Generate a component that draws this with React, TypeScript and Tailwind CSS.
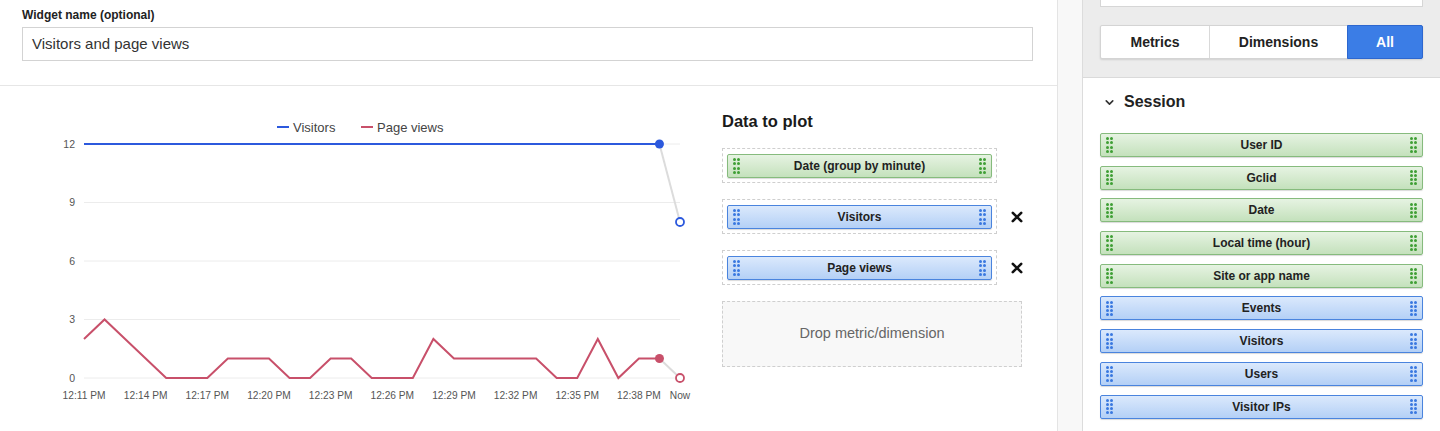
import { ChevronDown } from "lucide-react";

const FONT = { fontFamily: '"Liberation Sans", Arial, sans-serif' };

const X0 = 84;
const STEP = 596 / 29;
const Y0 = 378;
const UNIT = 19.5;

const pageViews = [2, 3, 2, 1, 0, 0, 0, 1, 1, 1, 0, 0, 1, 1, 0, 0, 0, 2, 1, 1, 1, 1, 1, 0, 0, 2, 0, 1, 1];
const xLabels = ["12:11 PM", "12:14 PM", "12:17 PM", "12:20 PM", "12:23 PM", "12:26 PM", "12:29 PM", "12:32 PM", "12:35 PM", "12:38 PM"];

const sessionItems: { label: string; kind: "dim" | "metric" }[] = [
  { label: "User ID", kind: "dim" },
  { label: "Gclid", kind: "dim" },
  { label: "Date", kind: "dim" },
  { label: "Local time (hour)", kind: "dim" },
  { label: "Site or app name", kind: "dim" },
  { label: "Events", kind: "metric" },
  { label: "Visitors", kind: "metric" },
  { label: "Users", kind: "metric" },
  { label: "Visitor IPs", kind: "metric" },
];

const xAt = (i: number) => X0 + i * STEP;
const yAt = (v: number) => Y0 - v * UNIT;

function Grip({ kind }: { kind: "dim" | "metric" }) {
  const dot = kind === "dim" ? "bg-[#3f9f35]" : "bg-[#3a78e0]";
  return (
    <div className="grid grid-cols-2 gap-x-[1px] gap-y-[1.2px]">
      {Array.from({ length: 8 }, (_, i) => (
        <span key={i} className={`h-[3px] w-[3px] rounded-full ${dot}`} />
      ))}
    </div>
  );
}

function Pill({ label, kind }: { label: string; kind: "dim" | "metric" }) {
  const look =
    kind === "dim"
      ? "border-[#86bb7d] bg-gradient-to-b from-[#e6f3e2] to-[#c4e1bc]"
      : "border-[#4a84de] bg-gradient-to-b from-[#dbe9fc] to-[#b4d0f6]";
  return (
    <div
      className={`flex h-[24px] items-center justify-between rounded-[2px] border px-[5px] shadow-[0_1px_1px_rgba(0,0,0,0.15)] ${look}`}
    >
      <Grip kind={kind} />
      <span className="text-[12px] font-bold text-[#222]">{label}</span>
      <Grip kind={kind} />
    </div>
  );
}

function CloseMark() {
  return (
    <svg width="12" height="12" viewBox="0 0 12 12" className="ml-[14px]">
      <path d="M1.8 1.8 L10.2 10.2 M10.2 1.8 L1.8 10.2" stroke="#111" strokeWidth="2.6" strokeLinecap="round" />
    </svg>
  );
}

function PlotSlot({ label, kind, removable }: { label: string; kind: "dim" | "metric"; removable?: boolean }) {
  return (
    <div className="flex items-center">
      <div className="w-[275px] border border-dashed border-[#cfcfcf] px-[4px] pt-[5px] pb-[4px]">
        <Pill label={label} kind={kind} />
      </div>
      {removable && <CloseMark />}
    </div>
  );
}

function Chart() {
  const pvPoints = pageViews.map((v, i) => `${xAt(i)},${yAt(v)}`).join(" ");
  const lastX = xAt(28);
  const nowX = xAt(29);
  return (
    <svg width="700" height="344" viewBox="0 86 700 344" className="shrink-0" style={FONT}>
      {[0, 3, 6, 9, 12].map((v) => (
        <g key={v}>
          <line x1={X0} x2={nowX} y1={yAt(v)} y2={yAt(v)} stroke="#ececec" strokeWidth="1" />
          <text x="75" y={yAt(v) + 3.5} textAnchor="end" fontSize="10.5" fill="#555">
            {v}
          </text>
        </g>
      ))}
      {xLabels.map((l, i) => (
        <text key={l} x={xAt(i * 3)} y="399" textAnchor="middle" fontSize="10.2" fill="#555">
          {l}
        </text>
      ))}
      <text x={nowX} y="399" textAnchor="middle" fontSize="10.2" fill="#555">
        Now
      </text>

      <line x1="277" x2="289" y1="127" y2="127" stroke="#2c59dd" strokeWidth="2" />
      <text x="293" y="131.5" fontSize="13" fill="#444">
        Visitors
      </text>
      <line x1="361" x2="373" y1="127" y2="127" stroke="#c8506a" strokeWidth="2" />
      <text x="377" y="131.5" fontSize="13" fill="#444">
        Page views
      </text>

      <line x1={lastX} y1={yAt(12)} x2={nowX} y2={yAt(8)} stroke="#dcdcdc" strokeWidth="2" />
      <line x1={lastX} y1={yAt(1)} x2={nowX} y2={yAt(0)} stroke="#dcdcdc" strokeWidth="2" />

      <line x1={X0} x2={lastX} y1={yAt(12)} y2={yAt(12)} stroke="#2c59dd" strokeWidth="2" />
      <polyline points={pvPoints} fill="none" stroke="#c8506a" strokeWidth="2" strokeLinejoin="miter" />

      <circle cx={lastX} cy={yAt(12)} r="4.5" fill="#2c59dd" />
      <circle cx={nowX} cy={yAt(8)} r="4" fill="#fff" stroke="#2c59dd" strokeWidth="1.8" />
      <circle cx={lastX} cy={yAt(1)} r="4.5" fill="#c8506a" />
      <circle cx={nowX} cy={yAt(0)} r="4" fill="#fff" stroke="#c8506a" strokeWidth="1.8" />
    </svg>
  );
}

export default function App() {
  return (
    <div className="flex h-[431px] overflow-hidden bg-[#f8f8f8] text-[#222]" style={FONT}>
      <div className="w-[1058px] shrink-0 border-r border-[#e4e4e4] bg-white">
        <div className="border-b border-[#e6e6e6] pl-[22px] pr-[24px] pb-[24px] pt-[7px]">
          <div className="mb-[4px] text-[12px] leading-4 font-bold text-[#222]">Widget name (optional)</div>
          <div className="flex h-[34px] items-center border border-[#d3d3d3] px-[9px] text-[15px] text-[#333]">
            Visitors and page views
          </div>
        </div>
        <div className="flex">
          <Chart />
          <div className="ml-[22px] flex flex-col pt-[25px]">
            <h2 className="text-[16.5px] leading-5 font-bold text-[#1a1a1a]">Data to plot</h2>
            <div className="mt-[17px] flex flex-col gap-[16px]">
              <PlotSlot label="Date (group by minute)" kind="dim" />
              <PlotSlot label="Visitors" kind="metric" removable />
              <PlotSlot label="Page views" kind="metric" removable />
              <div className="flex h-[66px] w-[300px] items-center justify-center border border-dashed border-[#cfcfcf] bg-[#f8f8f8] text-[14.5px] text-[#666]">
                Drop metric/dimension
              </div>
            </div>
          </div>
        </div>
      </div>

      <div className="ml-[24px] flex-1 border-l border-[#dcdcdc] bg-white">
        <div className="border-b border-[#dadada] bg-[#ececec] px-[17px] pb-[18px]">
          <div className="-mt-[27px] h-[34px] border border-[#d6d6d6] bg-white" />
          <div className="mt-[18px] flex h-[34px] rounded-[2px] border border-[#d4d4d4] bg-white text-[14px] font-bold shadow-[0_1px_2px_rgba(0,0,0,0.12)]">
            <div className="flex w-[109px] items-center justify-center border-r border-[#d9d9d9]">Metrics</div>
            <div className="flex w-[137px] items-center justify-center">Dimensions</div>
            <div className="-my-px -mr-px flex flex-1 items-center justify-center rounded-r-[2px] border border-[#2d67cf] bg-[#3b7de6] text-white">
              All
            </div>
          </div>
        </div>
        <div className="px-[17px] pt-[14px]">
          <div className="flex items-center pl-[3px]">
            <ChevronDown size={13} strokeWidth={3} className="text-[#333]" />
            <span className="ml-[8px] text-[16px] leading-5 font-bold text-[#222]">Session</span>
          </div>
          <div className="mt-[21px] flex flex-col gap-[8.7px]">
            {sessionItems.map((item) => (
              <Pill key={item.label} label={item.label} kind={item.kind} />
            ))}
          </div>
        </div>
      </div>
    </div>
  );
}
